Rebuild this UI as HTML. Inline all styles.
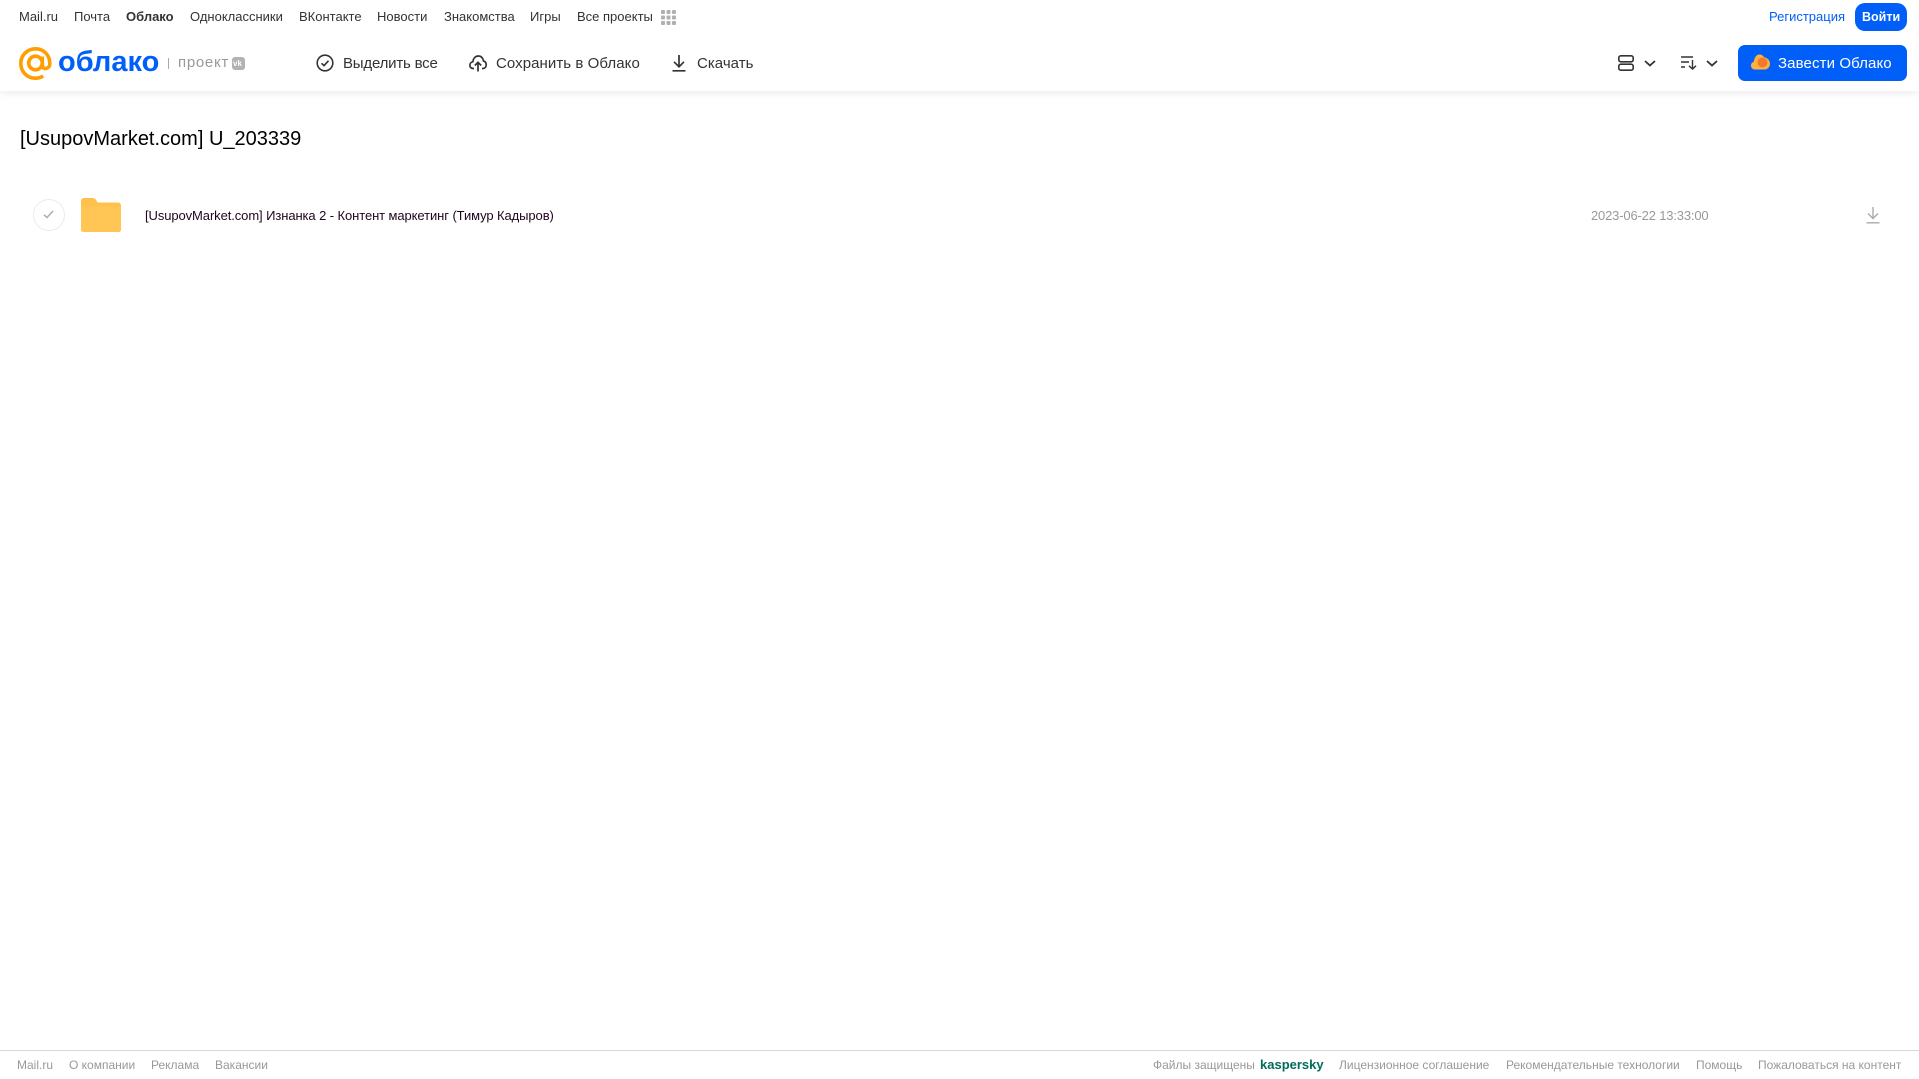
<!DOCTYPE html>
<html lang="ru"><head><meta charset="utf-8"><title>Облако</title>
<style>
html,body{margin:0;padding:0;width:1919px;height:1079px;overflow:hidden;background:#fff}
body{position:relative;font-family:"Liberation Sans",Arial,sans-serif}
.t{position:absolute;white-space:nowrap;line-height:18px;height:18px}
.n{font-size:13px;top:8px;color:#333}
.h{font-size:15px;top:55px;color:#333}
.f{font-size:12px;top:1056px;color:#999}
svg{position:absolute;overflow:visible}
</style></head><body>
<div style="position:absolute;left:0;top:0;width:1919px;height:91px;background:#fff;box-shadow:0 2px 8px rgba(0,0,0,.08)"></div>

<span class="t n" style="left:19px">Mail.ru</span>
<span class="t n" style="left:74px">Почта</span>
<span class="t n" style="left:126px;font-weight:700">Облако</span>
<span class="t n" style="left:190px">Одноклассники</span>
<span class="t n" style="left:299px">ВКонтакте</span>
<span class="t n" style="left:377px">Новости</span>
<span class="t n" style="left:444px">Знакомства</span>
<span class="t n" style="left:530px">Игры</span>
<span class="t n" style="left:577px">Все проекты</span>
<svg style="left:661px;top:10px" width="15" height="15" fill="#b0b0b0"><rect x="0" y="0" width="4" height="4" rx="1"/><rect x="5.500" y="0" width="4" height="4" rx="1"/><rect x="11" y="0" width="4" height="4" rx="1"/><rect x="0" y="5.500" width="4" height="4" rx="1"/><rect x="5.500" y="5.500" width="4" height="4" rx="1"/><rect x="11" y="5.500" width="4" height="4" rx="1"/><rect x="0" y="11" width="4" height="4" rx="1"/><rect x="5.500" y="11" width="4" height="4" rx="1"/><rect x="11" y="11" width="4" height="4" rx="1"/></svg>

<span class="t n" style="left:1769px;color:#005ff9">Регистрация</span>
<div style="position:absolute;left:1855px;top:3px;width:52px;height:28px;background:#005ff9;border-radius:10px"></div>
<span class="t n" style="left:1862px;color:#fff;font-weight:700;font-size:12.500px">Войти</span>

<svg style="left:19px;top:47px" width="33" height="33" viewBox="0 0 33 33" fill="none" stroke="#ff9e00" stroke-width="3.600"><circle cx="16.500" cy="16" r="6.800"/><path d="M23.300 9.500V18.500C23.300 22.800 30.800 22.800 30.800 16.500C30.800 7.800 24.500 1.800 16.500 1.800C8.200 1.800 1.800 8.300 1.800 16.500C1.800 24.800 8.200 31.200 16.500 31.200C19.500 31.200 21.800 30.500 24.200 29"/></svg>
<span class="t" style="left:58px;top:44px;height:36px;line-height:36px;font-size:29px;font-weight:700;color:#005ff9">облако</span>
<div style="position:absolute;left:168px;top:58px;width:1px;height:11px;background:#aaa"></div>
<span class="t" style="left:178px;top:54px;font-size:15px;color:#999;letter-spacing:.7px">проект</span>
<div style="position:absolute;left:232px;top:57px;width:13px;height:13px;background:#b2b2b2;border-radius:3px"></div>
<span class="t" style="left:233px;top:55px;font-size:8px;font-weight:700;color:#fff">vk</span>

<svg style="left:316px;top:54px" width="18" height="18" fill="none" stroke="#333" stroke-width="1.600"><circle cx="9" cy="9" r="7.800"/><path d="M5.500 9.300L8 11.600L12.500 6.800"/></svg>
<span class="t h" style="left:343px;letter-spacing:-.2px">Выделить все</span>
<svg style="left:469px;top:54px" width="18" height="18" fill="none" stroke="#333" stroke-width="1.700"><path d="M5 14.500H4C1.800 14.500 .9 12.800 .9 11.200C.9 9.400 2.200 8 3.800 7.800C4.300 4.400 6.300 2 9.300 2C12.300 2 14.200 4.300 14.500 7C16.200 7.500 17.200 8.900 17.200 10.700C17.200 12.800 15.900 14.500 13.800 14.500H13"/><path d="M9 17.500V8.500M5.800 11.500L9 8.300L12.200 11.500"/></svg>
<span class="t h" style="left:496px;letter-spacing:.07px">Сохранить в Облако</span>
<svg style="left:671px;top:54px" width="16" height="18" fill="none" stroke="#333" stroke-width="1.700"><path d="M8 1V12.500M3 7.800L8 12.800L13 7.800M1.500 16.800H14.500"/></svg>
<span class="t h" style="left:697px;letter-spacing:.03px">Скачать</span>

<svg style="left:1618px;top:55px" width="16" height="16" fill="none" stroke="#333" stroke-width="1.600"><rect x=".8" y=".8" width="14.400" height="6" rx="2"/><rect x=".8" y="9.200" width="14.400" height="6" rx="2"/></svg>
<svg style="left:1644px;top:60px" width="12" height="7" fill="none" stroke="#333" stroke-width="1.800"><path d="M1 1L6 5.500L11 1"/></svg>
<svg style="left:1681px;top:56px" width="16" height="14" fill="none" stroke="#333" stroke-width="1.400"><path d="M0 1H12M0 6H8M0 11H4M11.500 4V13M8 9.800L11.500 13L15 9.800"/></svg>
<svg style="left:1706px;top:60px" width="12" height="7" fill="none" stroke="#333" stroke-width="1.800"><path d="M1 1L6 5.500L11 1"/></svg>

<div style="position:absolute;left:1738px;top:45px;width:169px;height:36px;background:#005ff9;border-radius:7px"></div>
<svg style="left:1751px;top:54px" width="19" height="16"><path d="M4 15.500C1.800 15.500 0 13.800 0 11.600C0 9.500 1.300 8.200 2.800 7.800C3.200 3.500 5.600 .5 8.500 .5C10.500 .5 12 1.500 13 3.200C16.300 3.600 19 6.300 19 9.600C19 13 16.500 15.500 13.500 15.500Z" fill="#ffb13d"/><circle cx="11.500" cy="8.500" r="5" fill="#f5792a"/></svg>
<span class="t h" style="left:1778px;color:#fff;letter-spacing:.11px">Завести Облако</span>

<span class="t" style="left:20px;top:127px;height:24px;line-height:24px;font-size:20px;color:#000">[UsupovMarket.com] U_203339</span>

<div style="position:absolute;left:33px;top:199px;width:30px;height:30px;border:1px solid #ececec;border-radius:50%"></div>
<svg style="left:43px;top:210px" width="11" height="9" fill="none" stroke="#aaa" stroke-width="1.400"><path d="M1 4.800L4 7.500L10 1"/></svg>
<svg style="left:81px;top:198px" width="40" height="34"><path d="M0 3C0 1.300 1.300 0 3 0H11C13.500 0 15 1 16 3.500L16.500 4.500H37C38.700 4.500 40 5.800 40 7.500V31.500C40 33 38.700 34 37 34H3C1.300 34 0 33 0 31.500Z" fill="#ffc04d"/><path d="M0 8.500H40V31.500C40 33 38.700 34 37 34H3C1.300 34 0 33 0 31.500Z" fill="#ffc655"/></svg>
<span class="t" style="left:145px;top:207px;font-size:13px;color:#21051f;letter-spacing:-.09px">[UsupovMarket.com] Изнанка 2 - Контент маркетинг (Тимур Кадыров)</span>
<span class="t" style="left:1591px;top:207px;font-size:13px;color:#999;letter-spacing:-.17px">2023-06-22 13:33:00</span>
<svg style="left:1866px;top:207px" width="14" height="17" fill="none" stroke="#aaa" stroke-width="1.400"><path d="M7 0V11M2 6.500L7 11.500L12 6.500M.5 15.800H13.500"/></svg>

<div style="position:absolute;left:0;top:1050px;width:1919px;height:1px;background:#d9d9d9"></div>
<span class="t f" style="left:17px">Mail.ru</span>
<span class="t f" style="left:69px">О компании</span>
<span class="t f" style="left:151px">Реклама</span>
<span class="t f" style="left:215px">Вакансии</span>
<span class="t f" style="left:1153px">Файлы защищены</span>
<span class="t f" style="left:1260px;color:#006d5c;font-weight:700;font-size:13px">kaspersky</span>
<span class="t f" style="left:1339px">Лицензионное соглашение</span>
<span class="t f" style="left:1506px">Рекомендательные технологии</span>
<span class="t f" style="left:1696px">Помощь</span>
<span class="t f" style="left:1758px">Пожаловаться на контент</span>
</body></html>
